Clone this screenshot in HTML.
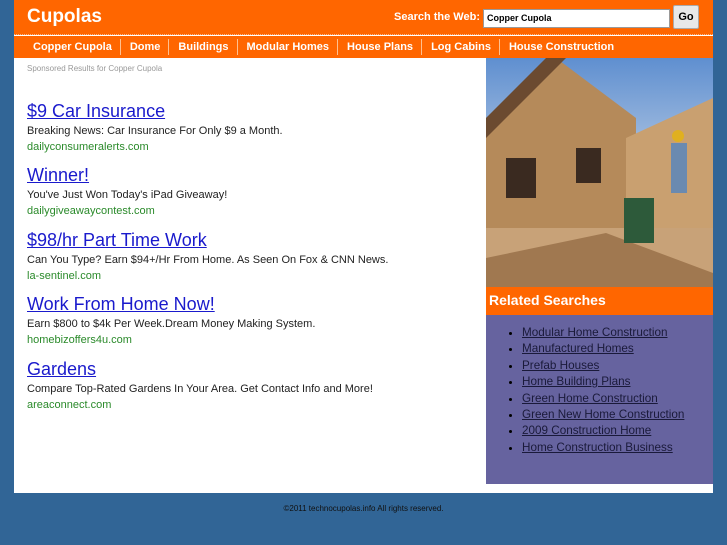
<!DOCTYPE html>
<html><head><style>
*{margin:0;padding:0;box-sizing:border-box}
body{width:727px;height:545px;background:#316596;font-family:"Liberation Sans",sans-serif;position:relative;overflow:hidden}
#wrap{position:absolute;left:14px;top:0;width:699px;height:493px;background:#fff}
#hdr{position:absolute;left:0;top:0;width:699px;height:35px;background:#ff6600;border-bottom:1px dotted #ffb080}
#logo{position:absolute;left:13px;top:6px;color:#fff;font-size:19px;font-weight:bold}
#sl{position:absolute;left:380px;top:11px;color:#fff;font-size:11px;font-weight:bold}
#sb{position:absolute;left:469px;top:9px;width:187px;height:19px;background:#fff;border:1px solid #999;font-size:9px;font-weight:bold;padding:3px 3px}
#go{position:absolute;left:659px;top:5px;width:26px;height:24px;background:#e8e8e8;border:1px solid #aaa;border-radius:2px;font-size:11px;font-weight:bold;text-align:center;line-height:22px}
#nav{position:absolute;left:0;top:36px;width:699px;height:22px;background:#ff6600;font-size:11px;font-weight:bold;color:#fff;padding-left:19px;line-height:22px;white-space:nowrap}
#nav span{display:inline-block;padding:0 8px 0 9px;border-left:1px solid #ffc090;line-height:16px}
#nav span:first-child{border:none;padding-left:0}
#sp{position:absolute;left:13px;top:64px;font-size:8px;color:#999}
.ad{position:absolute;left:13px}
.ad a{font-size:18px;color:#1a1acc;text-decoration:underline;display:block;line-height:22px}
.ad p{font-size:11px;color:#222;line-height:17px;margin-top:1px}
.ad i{font-style:normal;font-size:11px;color:#2a8a2a;display:block;line-height:15px}
#img{position:absolute;left:472px;top:58px;width:227px;height:229px;overflow:hidden;background:linear-gradient(#5f8fd0,#b3c8e3 50%)}
#rh{position:absolute;left:472px;top:287px;width:227px;height:28px;background:#ff6600;color:#fff;font-weight:bold;font-size:14px;padding:5px 3px}
#rl{position:absolute;left:472px;top:315px;width:227px;height:169px;background:#66639f;padding:10px 0 0 36px;font-size:11.7px}
#rl li{color:#000;line-height:16.4px}
#rl li span{color:#1a1a3a;text-decoration:underline}
#ft{position:absolute;left:0;top:504px;width:727px;text-align:center;font-size:8px;color:#111}
</style></head><body>
<div id="wrap">
<div id="hdr"><div id="logo">Cupolas</div><div id="sl">Search the Web:</div><div id="sb">Copper Cupola</div><div id="go">Go</div></div>
<div id="nav"><span>Copper Cupola</span><span>Dome</span><span>Buildings</span><span>Modular Homes</span><span>House Plans</span><span>Log Cabins</span><span>House Construction</span></div>
<div id="sp">Sponsored Results for Copper Cupola</div>
<div class="ad" style="top:100px"><a>$9 Car Insurance</a><p>Breaking News: Car Insurance For Only $9 a Month.</p><i>dailyconsumeralerts.com</i></div>
<div class="ad" style="top:164px"><a>Winner!</a><p>You've Just Won Today's iPad Giveaway!</p><i>dailygiveawaycontest.com</i></div>
<div class="ad" style="top:229px"><a>$98/hr Part Time Work</a><p>Can You Type? Earn $94+/Hr From Home. As Seen On Fox &amp; CNN News.</p><i>la-sentinel.com</i></div>
<div class="ad" style="top:293px"><a>Work From Home Now!</a><p>Earn $800 to $4k Per Week.Dream Money Making System.</p><i>homebizoffers4u.com</i></div>
<div class="ad" style="top:358px"><a>Gardens</a><p>Compare Top-Rated Gardens In Your Area. Get Contact Info and More!</p><i>areaconnect.com</i></div>
<div id="img"><svg width="227" height="229">
<polygon points="0,70 70,0 150,60 150,200 0,200" fill="#b58a5a"/>
<polygon points="0,60 70,-10 80,0 0,80" fill="#6b4a30"/>
<rect x="20" y="100" width="30" height="40" fill="#3a2a20"/>
<rect x="90" y="90" width="25" height="35" fill="#3a2a20"/>
<polygon points="140,80 227,40 227,200 140,200" fill="#c9a070"/>
<rect x="0" y="170" width="227" height="59" fill="#c8a278"/>
<polygon points="0,200 120,175 227,215 227,229 0,229" fill="#a07850"/>
<rect x="138" y="140" width="30" height="45" fill="#2d5a3a"/>
<rect x="185" y="85" width="16" height="50" fill="#6a8ab0"/>
<circle cx="192" cy="78" r="6" fill="#e0b020"/>
</svg></div>
<div id="rh">Related Searches</div>
<ul id="rl"><li><span>Modular Home Construction</span></li><li><span>Manufactured Homes</span></li><li><span>Prefab Houses</span></li><li><span>Home Building Plans</span></li><li><span>Green Home Construction</span></li><li><span>Green New Home Construction</span></li><li><span>2009 Construction Home</span></li><li><span>Home Construction Business</span></li></ul>
</div>
<div id="ft">©2011 technocupolas.info All rights reserved.</div>
</body></html>
